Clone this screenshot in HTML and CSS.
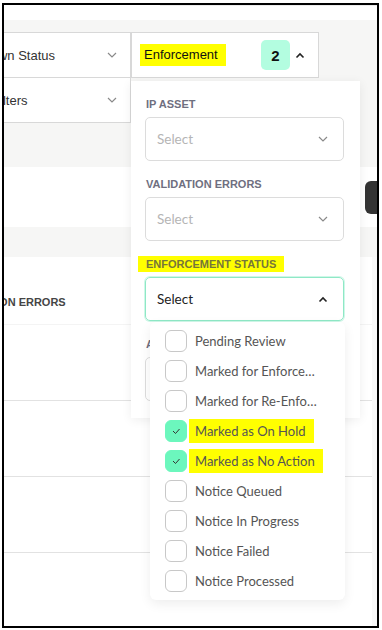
FILE: index.html
```html
<!DOCTYPE html>
<html lang="en">
<head>
  <meta charset="UTF-8">
  <meta name="viewport" content="width=device-width, initial-scale=1.0">
  <title>Enforcement Filter</title>
  <link rel="stylesheet" href="styles.css">
</head>
<body>

<div class="frame">

  <!-- Top strip -->
  <div class="top-strip"><div class="top-line"></div></div>

  <!-- Filter bar -->
  <div class="filter-area">
    <div class="filter-grid">
      <div class="filter-box">
        <span>Takedown Status</span>
        <svg class="chev" width="10" height="6" viewBox="0 0 10 6"><path d="M1 1l4 4 4-4" fill="none" stroke="#8a8a8a" stroke-width="1.2"/></svg>
      </div>
      <div class="filter-box">
        <span class="mark mark-head">Enforcement</span>
        <div class="box-right">
          <span class="badge">2</span>
          <svg class="chev" width="10" height="7" viewBox="0 0 10 7"><path d="M1.5 5.5l3.5-3.5 3.5 3.5" fill="none" stroke="#222" stroke-width="1.6"/></svg>
        </div>
      </div>
      <div class="filter-box row-two">
        <span>Other Filters</span>
        <svg class="chev" width="10" height="6" viewBox="0 0 10 6"><path d="M1 1l4 4 4-4" fill="none" stroke="#8a8a8a" stroke-width="1.2"/></svg>
      </div>
    </div>
  </div>

  <div class="band-white">
    <div class="dark-btn"></div>
  </div>
  <div class="band-gray"></div>

  <!-- Table -->
  <div class="table">
    <div class="table-main">
      <div class="table-head"><span class="col-title">VALIDATION ERRORS</span></div>
      <div class="table-row first"></div>
      <div class="table-row"></div>
      <div class="table-row"></div>
      <div class="table-row"></div>
    </div>
    <div class="table-side"></div>
  </div>

  <!-- Enforcement dropdown panel -->
  <div class="panel">
    <div class="field">
      <div class="field-label">IP ASSET</div>
      <div class="select">
        <span class="placeholder">Select</span>
        <svg width="10" height="6" viewBox="0 0 10 6"><path d="M1 1l4 4 4-4" fill="none" stroke="#8a8a8a" stroke-width="1.2"/></svg>
      </div>
    </div>
    <div class="field">
      <div class="field-label">VALIDATION ERRORS</div>
      <div class="select">
        <span class="placeholder">Select</span>
        <svg width="10" height="6" viewBox="0 0 10 6"><path d="M1 1l4 4 4-4" fill="none" stroke="#8a8a8a" stroke-width="1.2"/></svg>
      </div>
    </div>
    <div class="field">
      <div class="field-label"><span class="mark mark-label">ENFORCEMENT STATUS</span></div>
      <div class="select open">
        <span>Select</span>
        <svg width="10" height="7" viewBox="0 0 10 7"><path d="M1.5 5.5l3.5-3.5 3.5 3.5" fill="none" stroke="#222" stroke-width="1.6"/></svg>
      </div>
    </div>
    <div class="field">
      <div class="field-label">ACTION DATE</div>
      <div class="select">
        <span class="placeholder">Select</span>
      </div>
    </div>
  </div>

  <!-- Options list -->
  <div class="options">
    <div class="option"><span class="check"></span><span class="opt-text">Pending Review</span></div>
    <div class="option"><span class="check"></span><span class="opt-text">Marked for Enforcement</span></div>
    <div class="option"><span class="check"></span><span class="opt-text">Marked for Re-Enforcement</span></div>
    <div class="option checked">
      <span class="check"><svg width="10" height="8" viewBox="0 0 10 8"><path d="M2 4l2.5 2.5L8.5 2" fill="none" stroke="#333" stroke-width="1"/></svg></span>
      <span class="opt-text mark mark-opt">Marked as On Hold</span>
    </div>
    <div class="option checked">
      <span class="check"><svg width="10" height="8" viewBox="0 0 10 8"><path d="M2 4l2.5 2.5L8.5 2" fill="none" stroke="#333" stroke-width="1"/></svg></span>
      <span class="opt-text mark mark-opt">Marked as No Action</span>
    </div>
    <div class="option"><span class="check"></span><span class="opt-text">Notice Queued</span></div>
    <div class="option"><span class="check"></span><span class="opt-text">Notice In Progress</span></div>
    <div class="option"><span class="check"></span><span class="opt-text">Notice Failed</span></div>
    <div class="option"><span class="check"></span><span class="opt-text">Notice Processed</span></div>
  </div>

</div>

</body>
</html>
```

FILE: styles.css
```css
body {
  margin: 0;
  padding: 0;
  background-color: #fff;
  font-family: "Liberation Sans", Arial, sans-serif;
}

.frame {
  position: relative;
  margin: 3px 0 0 2px;
  width: 373px;
  height: 621px;
  border: 2px solid #000;
  overflow: hidden;
  background-color: #fff;
}

.top-strip {
  height: 15px;
  background-color: #fff;
}

.top-line {
  margin-left: 156px;
  border-top: 1px solid #ececec;
}

.filter-area {
  height: 135px;
  padding-top: 12px;
  background-color: #f6f6f5;
}

.filter-grid {
  display: grid;
  grid-template-columns: 188px 188px;
  margin-left: -61px;
}

.filter-box {
  display: flex;
  align-items: center;
  justify-content: space-between;
  box-sizing: border-box;
  height: 46px;
  padding: 0 13px 0 12px;
  background-color: #fff;
  border: 1px solid #d8d8d8;
  font-size: 13px;
  color: #333;
}

.filter-box.row-two {
  margin-top: -1px;
}

.box-right {
  display: flex;
  align-items: center;
  gap: 5px;
}

.badge {
  display: flex;
  align-items: center;
  justify-content: center;
  width: 29px;
  height: 30px;
  border-radius: 5px;
  background-color: #b3fde0;
  font-size: 15px;
  font-weight: bold;
  color: #111;
}

.mark {
  background-color: #ffff00;
}

.mark-head {
  padding: 4px 8px 4px 4px;
  margin-left: -4px;
  line-height: 14px;
  color: #111;
}

.band-white {
  display: flex;
  align-items: center;
  justify-content: flex-end;
  height: 60px;
}

.dark-btn {
  width: 20px;
  height: 33px;
  margin-right: -8px;
  border-radius: 6px;
  background-color: #333;
}

.band-gray {
  height: 30px;
  background-color: #f6f6f5;
}

.table {
  display: flex;
  height: 369px;
}

.table-main {
  flex-grow: 1;
}

.table-side {
  width: 5px;
  background-color: #f8f8f8;
}

.table-head {
  height: 67px;
  box-sizing: border-box;
  padding-top: 35px;
}

.col-title {
  margin-left: -54px;
  font-size: 11px;
  font-weight: bold;
  color: #454545;
}

.table-row {
  height: 76px;
  box-sizing: border-box;
  border-top: 1px solid #e2e2e2;
}

.table-row.first {
  border-top-color: #f4f4f4;
}

.panel {
  position: absolute;
  left: 127px;
  top: 76px;
  width: 229px;
  height: 337px;
  box-sizing: border-box;
  padding: 15px 15px 0 15px;
  background-color: #fff;
  box-shadow: 0 2px 10px rgba(0, 0, 0, 0.07);
}

.field {
  margin-bottom: 15px;
}

.field-label {
  height: 16px;
  margin-bottom: 5px;
  line-height: 16px;
  font-size: 11px;
  font-weight: bold;
  color: #6f6f80;
}

.mark-label {
  padding: 2px 8px;
  margin-left: -8px;
  color: #76763a;
}

.select {
  display: flex;
  align-items: center;
  justify-content: space-between;
  box-sizing: border-box;
  width: 199px;
  height: 44px;
  margin-left: -1px;
  padding: 0 15px 0 11px;
  border: 1px solid #dcdcdc;
  border-radius: 5px;
  font-family: Lato, "Liberation Sans", sans-serif;
  font-size: 13.5px;
  color: #222;
}

.select.open {
  border-color: #8fe8c6;
  box-shadow: 0 0 0 1px rgba(160, 240, 210, 0.5);
}

.placeholder {
  color: #b5b5b5;
}

.options {
  position: absolute;
  left: 146px;
  top: 317px;
  width: 195px;
  height: 278px;
  box-sizing: border-box;
  padding: 4px 0;
  background-color: #fff;
  border-radius: 6px;
  box-shadow: 0 4px 12px rgba(0, 0, 0, 0.07);
}

.option {
  display: flex;
  align-items: center;
  height: 30px;
  padding-left: 15px;
  font-family: Lato, "Liberation Sans", sans-serif;
  font-size: 13px;
  color: #555;
}

.check {
  display: flex;
  align-items: center;
  justify-content: center;
  flex-shrink: 0;
  box-sizing: border-box;
  width: 22px;
  height: 22px;
  margin-right: 8px;
  border: 1px solid #c8c8c8;
  border-radius: 6px;
}

.option.checked .check {
  border-color: #6cf7bd;
  background-color: #6cf7bd;
}

.opt-text {
  max-width: 124px;
  overflow: hidden;
  white-space: nowrap;
  text-overflow: ellipsis;
  line-height: 18px;
}

.mark-opt {
  max-width: none;
  padding: 3px 8px 3px 6px;
  margin-left: -6px;
  color: #555;
}
```
